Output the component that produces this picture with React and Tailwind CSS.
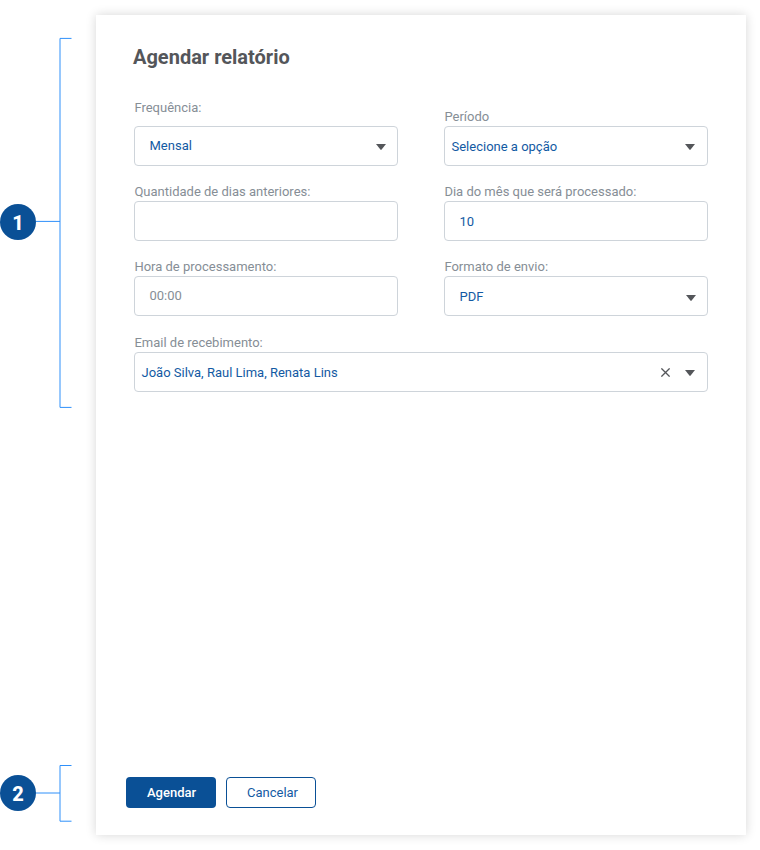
import React from "react";

function Caret({ className = "" }) {
  return (
    <svg className={`shrink-0 ${className}`} width="10" height="6" viewBox="0 0 10 6" fill="#54565a">
      <path d="M0 0H10L5.6 5.6Q5 6.2 4.4 5.6Z" />
    </svg>
  );
}

function Field({ label, labelClass = "", boxClass = "", className = "", children }) {
  return (
    <div className={`flex flex-col justify-end ${className}`}>
      <label className={`block h-[18px] pl-[0.4px] text-[13px] leading-[18px] text-[#868e96] ${labelClass}`}>
        {label}
      </label>
      <div
        className={`flex h-10 items-center rounded-[4px] border border-[#ced4da] text-[13px] leading-[18px] text-[#135aa3] ${boxClass}`}
      >
        {children}
      </div>
    </div>
  );
}

function Badge({ children, className = "" }) {
  return (
    <div
      className={`flex size-9 shrink-0 items-center justify-center rounded-full bg-[#0a5096] pt-[2px] text-[20px] leading-none font-extrabold text-white ${className}`}
    >
      {children}
    </div>
  );
}

export default function App() {
  return (
    <div className="flex h-[850px] w-[760px] overflow-hidden bg-white font-['Roboto',sans-serif]">
      <aside className="flex w-24 shrink-0 flex-col pt-[37px]">
        <div className="flex h-[372px]">
          <Badge className="mt-[167px]">1</Badge>
          <svg width="36" height="372" viewBox="0 0 36 372" fill="none" stroke="#2e90fa">
            <path d="M35.5 1.4H24V370.4H35.5M0 184.4H24" />
          </svg>
        </div>
        <div className="mt-[355px] flex h-[60px]">
          <Badge className="mt-[11px]">2</Badge>
          <svg width="36" height="60" viewBox="0 0 36 60" fill="none" stroke="#2e90fa">
            <path d="M35.5 1.5H24V57.2H35.5M0 29H24" />
          </svg>
        </div>
      </aside>

      <main className="mt-[15px] flex h-[820px] w-[650px] flex-col bg-white px-[38px] pt-[28px] pb-[27px] shadow-[0_0_10px_rgba(0,0,0,0.16)]">
        <h1 className="-ml-px h-7 text-[20px] leading-7 font-bold text-[#54565a]">Agendar relatório</h1>

        <form className="mt-[28px] flex flex-col">
          <div className="grid grid-cols-2 gap-x-[46px] gap-y-[17px]">
            <Field label="Frequência:" labelClass="mb-[9px]" boxClass="justify-between pl-[14.5px] pr-[11px]">
              <span>Mensal</span>
              <Caret className="mt-px" />
            </Field>
            <Field label="Período" boxClass="justify-between pl-[6.5px] pr-[12px]">
              <span className="pt-0.5">Selecione a opção</span>
              <Caret className="mt-px" />
            </Field>
            <Field label="Quantidade de dias anteriores:" />
            <Field label="Dia do mês que será processado:" boxClass="pl-[14.5px]">
              <span className="pt-0.5">10</span>
            </Field>
            <Field label="Hora de processamento:" boxClass="pl-[14.5px]">
              <span className="text-[#868e96]">00:00</span>
            </Field>
            <Field label="Formato de envio:" boxClass="justify-between pl-[14.5px] pr-[11px]">
              <span className="pt-0.5">PDF</span>
              <Caret className="mt-[3px]" />
            </Field>
          </div>
          <Field label="Email de recebimento:" className="mt-[17px] pt-px" boxClass="pl-[6.5px] pr-[12px]">
            <span className="flex-1 pt-0.5">João Silva, Raul Lima, Renata Lins</span>
            <svg className="mr-[15px]" width="9" height="9" viewBox="0 0 9 9" stroke="#54565a" strokeWidth="1.3">
              <path d="M0.4 0.4L8.6 8.6M8.6 0.4L0.4 8.6" />
            </svg>
            <Caret className="mt-px" />
          </Field>
        </form>

        <div className="mt-auto -ml-2 flex gap-2.5">
          <button
            type="button"
            className="h-[31px] w-[90px] rounded-[4px] bg-[#0a5096] pl-px text-[13px] font-medium text-white"
          >
            Agendar
          </button>
          <button
            type="button"
            className="h-[31px] w-[90px] rounded-[4px] border border-[#0a5096] pl-[3px] text-[13px] text-[#135aa3]"
          >
            Cancelar
          </button>
        </div>
      </main>
    </div>
  );
}
